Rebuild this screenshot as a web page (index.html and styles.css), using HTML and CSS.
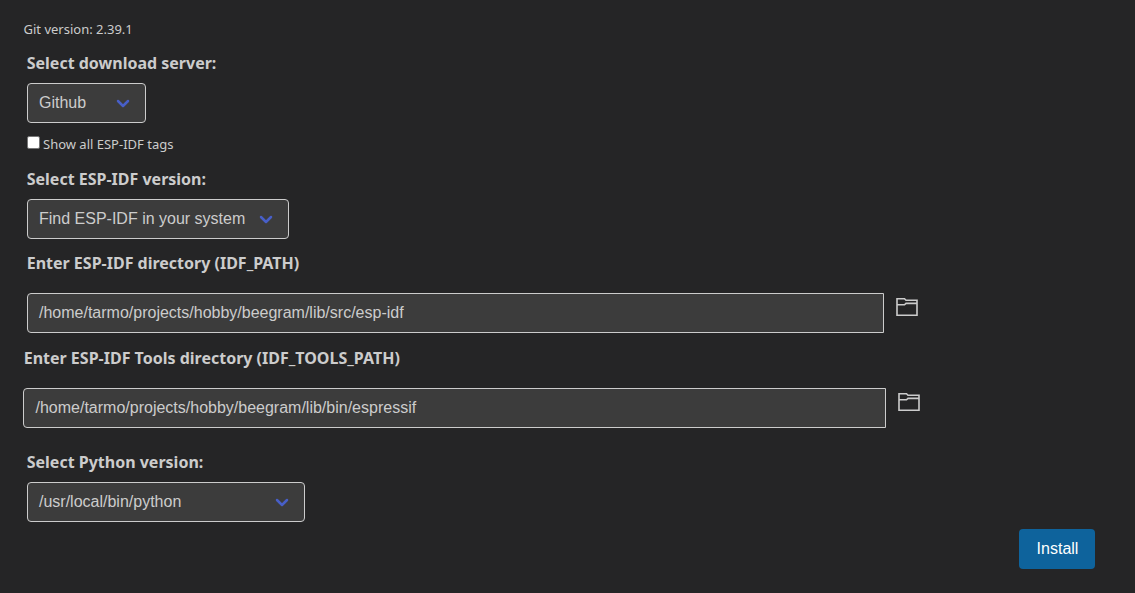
FILE: index.html
```
<!DOCTYPE html>
<html lang="en">
<head>
<meta charset="utf-8">
<title>ESP-IDF Setup</title>
<link rel="stylesheet" href="styles.css">
</head>
<body>
<main class="setup">
  <p class="git">Git version: 2.39.1</p>
  <section class="field">
    <label class="label">Select download server:</label>
    <div class="control select server"><span>Github</span><svg class="chevron" viewBox="0 0 14 10"><path d="M2 2l5 5 5-5"/></svg></div>
  </section>
  <label class="tags"><span class="checkbox"></span><span>Show all ESP-IDF tags</span></label>
  <section class="field">
    <label class="label">Select ESP-IDF version:</label>
    <div class="control select version"><span>Find ESP-IDF in your system</span><svg class="chevron" viewBox="0 0 14 10"><path d="M2 2l5 5 5-5"/></svg></div>
  </section>
  <section class="field path">
    <label class="label">Enter ESP-IDF directory (IDF_PATH)</label>
    <div class="row">
      <div class="control input">/home/tarmo/projects/hobby/beegram/lib/src/esp-idf</div>
      <svg class="folder" viewBox="0 0 22 18"><path d="M1 .8H8.5L10 2.3H21V17.2H1ZM1 6.8H8.5L10 5.4H21"/></svg>
    </div>
  </section>
  <section class="field path tools">
    <label class="label">Enter ESP-IDF Tools directory (IDF_TOOLS_PATH)</label>
    <div class="row">
      <div class="control input">/home/tarmo/projects/hobby/beegram/lib/bin/espressif</div>
      <svg class="folder" viewBox="0 0 22 18"><path d="M1 .8H8.5L10 2.3H21V17.2H1ZM1 6.8H8.5L10 5.4H21"/></svg>
    </div>
  </section>
  <section class="field python-field">
    <label class="label">Select Python version:</label>
    <div class="control select python"><span>/usr/local/bin/python</span><svg class="chevron" viewBox="0 0 14 10"><path d="M2 2l5 5 5-5"/></svg></div>
  </section>
  <footer class="actions"><button class="install">Install</button></footer>
</main>
</body>
</html>
```
FILE: styles.css
```
* { box-sizing: border-box; }
body {
  margin: 0;
  background: #252526;
  color: #ccc;
  font: 13px/18px "Noto Sans", sans-serif;
}
.setup {
  display: flex;
  flex-direction: column;
  height: 593px;
  padding: 20px 40px 0 27px;
  overflow: hidden;
}
.git { margin: 0 0 13px -3.5px; }
.field { display: flex; flex-direction: column; gap: 8px; }
.label { margin-left: -0.3px; font-size: 16px; font-weight: 700; line-height: 24px; }
.control {
  display: flex;
  align-items: center;
  height: 40px;
  padding: 0 11px;
  background: #3c3c3c;
  border: 1px solid #ccc;
  border-radius: 4px;
  font: 16px/24px "Liberation Sans", sans-serif;
}
.select { justify-content: space-between; padding-right: 15px; }
.server { width: 119px; }
.version { width: 262px; }
.python { width: 278px; }
.chevron {
  width: 14px;
  height: 10px;
  margin-top: 1px;
  fill: none;
  stroke: #485fc7;
  stroke-width: 2.5;
  stroke-linecap: round;
  stroke-linejoin: round;
}
.tags { display: flex; align-items: center; gap: 3px; height: 22px; margin: 10px 0 12px; }
.checkbox {
  width: 13px;
  height: 13px;
  margin-bottom: 3px;
  background: #fff;
  border: 1px solid #767676;
  border-radius: 2px;
}
.path { gap: 18px; margin-top: 12px; }
.row { display: flex; gap: 12px; }
.input { width: 857px; border-radius: 4px 0 0 4px; }
.folder {
  width: 22px;
  height: 18px;
  margin-top: 5px;
  fill: none;
  stroke: #ccc;
  stroke-width: 1.6;
}
.tools { margin: 13px 0 0 -3px; }
.tools .row { margin-left: -1px; }
.tools .input { width: 863px; padding-left: 11.5px; }
.python-field { margin-top: 22px; }
.actions { display: flex; justify-content: flex-end; margin-top: 7px; }
.install {
  width: 76px;
  height: 40px;
  padding: 0 0 0 1px;
  border: 0;
  border-radius: 4px;
  background: #0e639c;
  color: #fff;
  font: 16px/24px "Liberation Sans", sans-serif;
}
```
